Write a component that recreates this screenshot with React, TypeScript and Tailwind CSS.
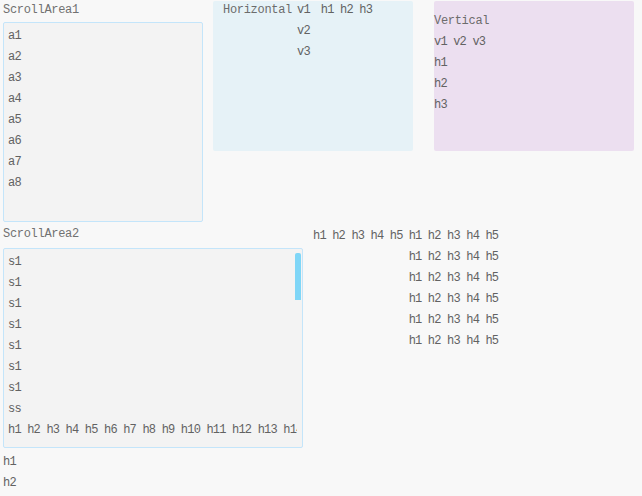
import React from "react";

const Row = ({ children }: { children: React.ReactNode }) => (
  <div className="h-[21px] leading-[21px] whitespace-nowrap">{children}</div>
);

const Label = ({ children }: { children: React.ReactNode }) => (
  <div className="h-[20px] leading-[20px] text-[#717171] tracking-[-0.3px]">{children}</div>
);

const App = () => {
  const aItems = ["a1", "a2", "a3", "a4", "a5", "a6", "a7", "a8"];
  const sItems = ["s1", "s1", "s1", "s1", "s1", "s1", "s1"];
  const hRow = Array.from({ length: 20 }, (_, i) => "h" + (i + 1)).join(" ");

  return (
    <div className="w-[642px] h-[496px] overflow-hidden bg-[#f8f8f8] text-[12px] text-[#626262] tracking-[-0.8px] font-['Liberation_Mono',monospace]">
      {/* top row */}
      <div className="flex items-start">
        <div className="ml-[3px] w-[200px]">
          <Label>ScrollArea1</Label>
          <div className="mt-[2px] h-[200px] border border-[#c4e5fa] rounded-[2px] bg-[#f3f3f3] pl-[4px] pt-[3px]">
            {aItems.map((a) => (
              <Row key={a}>{a}</Row>
            ))}
          </div>
        </div>

        <div className="ml-[10px] mt-[1px] w-[200px] h-[150px] rounded-[2px] bg-[#e6f2f7] pl-[10px]">
          <div className="flex -mt-[1px]">
            <Row>
              <span className="tracking-[-0.3px] text-[#6c6c6c]">Horizontal</span>
            </Row>
            <div className="ml-[5px]">
              <Row>v1</Row>
              <Row>v2</Row>
              <Row>v3</Row>
            </div>
            <div className="ml-[11px]">
              <Row>h1 h2 h3</Row>
            </div>
          </div>
        </div>

        <div className="ml-[21px] mt-[1px] w-[200px] h-[150px] rounded-[2px] bg-[#ecdff0] pt-[10px]">
          <Row>
            <span className="tracking-[-0.3px] text-[#6c6c6c]">Vertical</span>
          </Row>
          <Row>v1 v2 v3</Row>
          <Row>h1</Row>
          <Row>h2</Row>
          <Row>h3</Row>
        </div>
      </div>

      {/* second row */}
      <div className="flex items-start mt-[2px]">
        <div className="ml-[3px] w-[300px]">
          <Label>ScrollArea2</Label>
          <div className="relative mt-[4px] h-[200px] border border-[#c4e5fa] rounded-[2px] bg-[#f3f3f3] pl-[4px] pt-[3px]">
            <div className="overflow-hidden mr-[5px]">
              {sItems.map((s, i) => (
                <Row key={i}>{s}</Row>
              ))}
              <Row>ss</Row>
              <Row>{hRow}</Row>
            </div>
            <div className="absolute right-[1px] top-[4px] w-[6px] h-[47px] rounded-t-[2px] bg-[#7fd6f7]" />
          </div>
        </div>
        <div className="flex ml-[10px] mt-[2px]">
          <Row>h1 h2 h3 h4 h5</Row>
          <div className="ml-[6px]">
            {[0, 1, 2, 3, 4, 5].map((i) => (
              <Row key={i}>h1 h2 h3 h4 h5</Row>
            ))}
          </div>
        </div>
      </div>

      {/* bottom */}
      <div className="ml-[3px] mt-[4px]">
        <Row>h1</Row>
        <Row>h2</Row>
      </div>
    </div>
  );
};

export default App;
